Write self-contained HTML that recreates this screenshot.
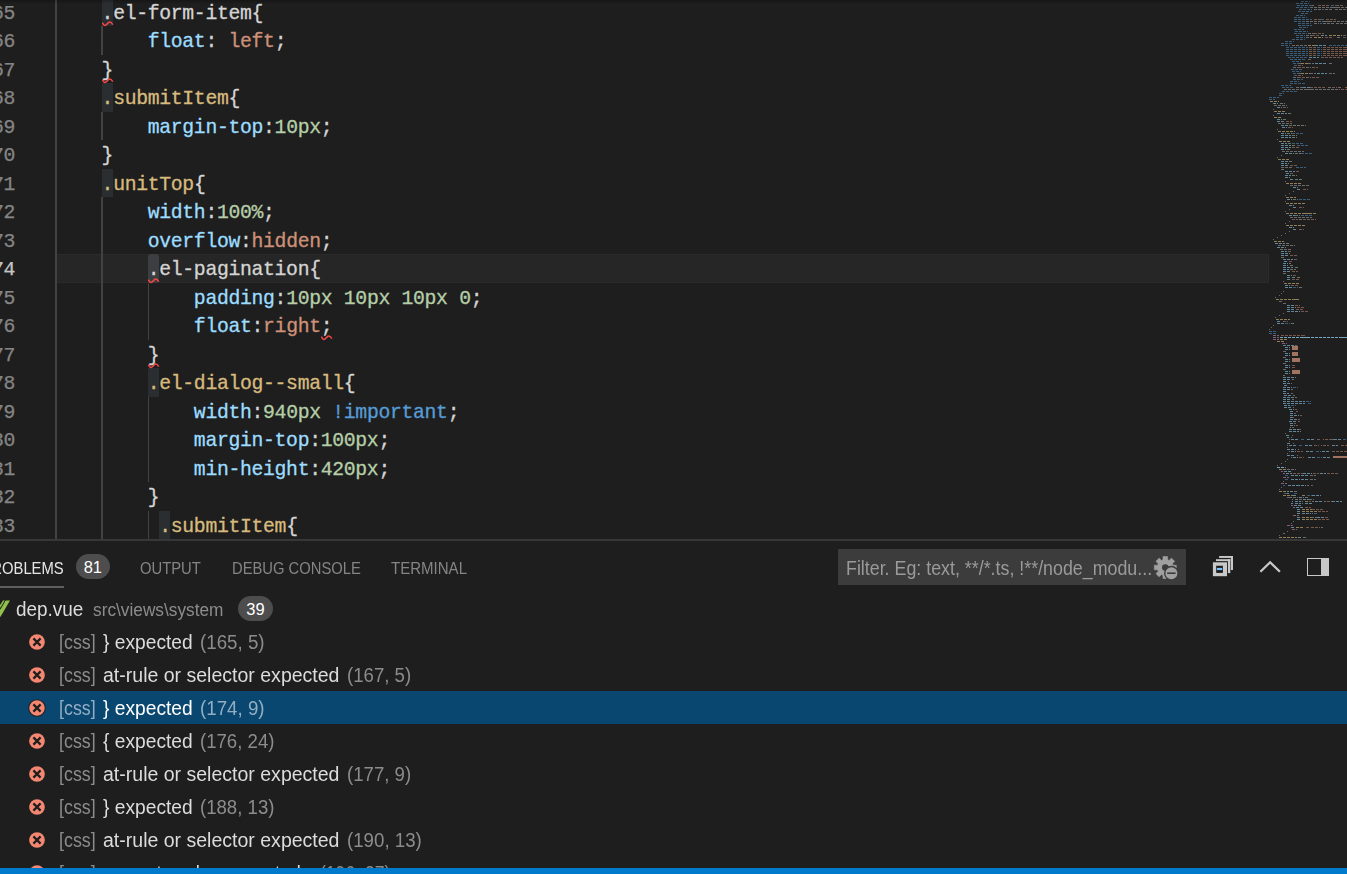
<!DOCTYPE html>
<html>
<head>
<meta charset="utf-8">
<title>dep.vue</title>
<style>
html,body{margin:0;padding:0;background:#1e1e1e;}
body{width:1347px;height:874px;overflow:hidden;position:relative;font-family:"Liberation Sans",sans-serif;}
#editor{position:absolute;left:0;top:0;width:1347px;height:540px;overflow:hidden;background:#1e1e1e;}
.ln{position:absolute;left:-41px;width:56px;height:28.5px;line-height:28.5px;margin-top:2.25px;text-align:right;font-family:"Liberation Mono",monospace;font-size:19.75px;letter-spacing:-0.32px;color:#858585;white-space:pre;-webkit-text-stroke:0.25px;}
.ln.act{color:#c6c6c6;}
.cl{position:absolute;height:28.5px;line-height:28.5px;margin-top:2.25px;font-family:"Liberation Mono",monospace;font-size:19.75px;letter-spacing:-0.32px;color:#d4d4d4;white-space:pre;-webkit-text-stroke:0.3px;}
.p{color:#9cdcfe}.v{color:#ce9178}.n{color:#b5cea8}.s{color:#d7ba7d}.k{color:#569cd6}
.g{position:absolute;width:1.2px;background:#424242;}
.hl{position:absolute;width:11px;height:28.5px;background:#2b2e31;}
.hl.cur{background:#3c3e41;border-radius:3px;width:11.2px;}
.sq{position:absolute;width:12px;height:6px;}
#curline{position:absolute;left:55.5px;top:254px;width:1213.7px;height:29px;background:#262626;border:1.5px solid #2a2a2a;box-sizing:border-box;}
#shadow{position:absolute;left:0;top:0;width:1347px;height:3.5px;background:linear-gradient(#000 0,rgba(0,0,0,0) 100%);opacity:.27;}
#minimap{position:absolute;left:1268px;top:0;width:79px;height:540px;overflow:hidden;}
#panel{position:absolute;left:0;top:540px;width:1347px;height:329px;background:#1e1e1e;overflow:hidden;}
#pborder{position:absolute;left:0;top:539px;width:1347px;height:2.4px;background:linear-gradient(#2c2c2c,#414141 45%,#414141 55%,#2a2a2a);}
#status{position:absolute;left:0;top:868.4px;width:1347px;height:6px;background:#007acc;}
.t{position:absolute;white-space:pre;line-height:1;}
.tab{font-size:16.5px;color:#858585;top:19.7px;}
.tab.on{color:#e7e7e7;}
.badge{position:absolute;overflow:hidden;background:#4d4d4d;border-radius:13px;color:#fff;text-align:center;}
.row{position:absolute;left:0;width:1347px;height:33px;}
.row.sel{background:#094771;}
.r{font-size:19.5px;top:8px;color:#dcdcdc;}
.dim{color:#8c8c8c;}
.sel .r{color:#ffffff;}
.sel .dim{color:#93adc2;}
.ei{position:absolute;left:28.2px;top:8.6px;width:18px;height:18px;}
#minimap i{position:absolute;display:block;height:1.15px;margin-top:.65px;background:currentColor;}
#minimap i.d{background:repeating-linear-gradient(90deg,currentColor 0,currentColor 3.1px,transparent 3.1px,transparent 3.9px);}
#minimap .b{color:#569cd6;opacity:.5}#minimap .w{color:#d4d4d4;opacity:.42}#minimap .o{color:#ce9178;opacity:.5}
#minimap .y{color:#d7ba7d;opacity:.62}#minimap .g{color:#b5cea8;opacity:.5}#minimap .l{color:#9cdcfe;opacity:.55}
#minimap .p{color:#c586c0;opacity:.6}#minimap .l.s{opacity:.72}#minimap .o.s{opacity:.75;height:2px;margin-top:0}
#minimap{filter:blur(.35px);}

</style>
</head>
<body>
<div id="editor">
<div id="curline"></div>
<div class="g" style="left:55.35px;top:-2.50px;height:28.5px"></div>
<div class="g" style="left:55.35px;top:26.00px;height:28.5px"></div>
<div class="g" style="left:101.47px;top:26.00px;height:28.5px"></div>
<div class="g" style="left:55.35px;top:54.50px;height:28.5px"></div>
<div class="g" style="left:55.35px;top:83.00px;height:28.5px"></div>
<div class="g" style="left:55.35px;top:111.50px;height:28.5px"></div>
<div class="g" style="left:101.47px;top:111.50px;height:28.5px"></div>
<div class="g" style="left:55.35px;top:140.00px;height:28.5px"></div>
<div class="g" style="left:55.35px;top:168.50px;height:28.5px"></div>
<div class="g" style="left:55.35px;top:197.00px;height:28.5px"></div>
<div class="g" style="left:101.47px;top:197.00px;height:28.5px"></div>
<div class="g" style="left:55.35px;top:225.50px;height:28.5px"></div>
<div class="g" style="left:101.47px;top:225.50px;height:28.5px"></div>
<div class="g" style="left:55.35px;top:254.00px;height:28.5px"></div>
<div class="g" style="left:101.47px;top:254.00px;height:28.5px"></div>
<div class="g" style="left:55.35px;top:282.50px;height:28.5px"></div>
<div class="g" style="left:101.47px;top:282.50px;height:28.5px"></div>
<div class="g" style="left:147.59px;top:282.50px;height:28.5px"></div>
<div class="g" style="left:55.35px;top:311.00px;height:28.5px"></div>
<div class="g" style="left:101.47px;top:311.00px;height:28.5px"></div>
<div class="g" style="left:147.59px;top:311.00px;height:28.5px"></div>
<div class="g" style="left:55.35px;top:339.50px;height:28.5px"></div>
<div class="g" style="left:101.47px;top:339.50px;height:28.5px"></div>
<div class="g" style="left:55.35px;top:368.00px;height:28.5px"></div>
<div class="g" style="left:101.47px;top:368.00px;height:28.5px"></div>
<div class="g" style="left:55.35px;top:396.50px;height:28.5px"></div>
<div class="g" style="left:101.47px;top:396.50px;height:28.5px"></div>
<div class="g" style="left:147.59px;top:396.50px;height:28.5px"></div>
<div class="g" style="left:55.35px;top:425.00px;height:28.5px"></div>
<div class="g" style="left:101.47px;top:425.00px;height:28.5px"></div>
<div class="g" style="left:147.59px;top:425.00px;height:28.5px"></div>
<div class="g" style="left:55.35px;top:453.50px;height:28.5px"></div>
<div class="g" style="left:101.47px;top:453.50px;height:28.5px"></div>
<div class="g" style="left:147.59px;top:453.50px;height:28.5px"></div>
<div class="g" style="left:55.35px;top:482.00px;height:28.5px"></div>
<div class="g" style="left:101.47px;top:482.00px;height:28.5px"></div>
<div class="g" style="left:55.35px;top:510.50px;height:28.5px"></div>
<div class="g" style="left:101.47px;top:510.50px;height:28.5px"></div>
<div class="g" style="left:147.59px;top:510.50px;height:28.5px"></div>
<div class="hl" style="left:101.62px;top:-2.50px"></div>
<div class="hl" style="left:101.62px;top:83.00px"></div>
<div class="hl" style="left:101.62px;top:168.50px"></div>
<div class="hl cur" style="left:147.74px;top:254.00px"></div>
<div class="hl" style="left:147.74px;top:368.00px"></div>
<div class="hl" style="left:159.27px;top:510.50px"></div>
<div class="ln" style="top:-2.50px">165</div>
<div class="cl" style="top:-2.50px;left:101.62px">.el-form-item{</div>
<div class="ln" style="top:26.00px">166</div>
<div class="cl" style="top:26.00px;left:147.74px"><span class="p">float</span>: <span class="v">left</span>;</div>
<div class="ln" style="top:54.50px">167</div>
<div class="cl" style="top:54.50px;left:101.62px">}</div>
<div class="ln" style="top:83.00px">168</div>
<div class="cl" style="top:83.00px;left:101.62px"><span class="s">.submitItem</span>{</div>
<div class="ln" style="top:111.50px">169</div>
<div class="cl" style="top:111.50px;left:147.74px"><span class="p">margin-top</span>:<span class="n">10px</span>;</div>
<div class="ln" style="top:140.00px">170</div>
<div class="cl" style="top:140.00px;left:101.62px">}</div>
<div class="ln" style="top:168.50px">171</div>
<div class="cl" style="top:168.50px;left:101.62px"><span class="s">.unitTop</span>{</div>
<div class="ln" style="top:197.00px">172</div>
<div class="cl" style="top:197.00px;left:147.74px"><span class="p">width</span>:<span class="n">100%</span>;</div>
<div class="ln" style="top:225.50px">173</div>
<div class="cl" style="top:225.50px;left:147.74px"><span class="p">overflow</span>:<span class="v">hidden</span>;</div>
<div class="ln act" style="top:254.00px">174</div>
<div class="cl" style="top:254.00px;left:147.74px">.el-pagination{</div>
<div class="ln" style="top:282.50px">175</div>
<div class="cl" style="top:282.50px;left:193.86px"><span class="p">padding</span>:<span class="n">10px</span> <span class="n">10px</span> <span class="n">10px</span> <span class="n">0</span>;</div>
<div class="ln" style="top:311.00px">176</div>
<div class="cl" style="top:311.00px;left:193.86px"><span class="p">float</span>:<span class="v">right</span>;</div>
<div class="ln" style="top:339.50px">177</div>
<div class="cl" style="top:339.50px;left:147.74px">}</div>
<div class="ln" style="top:368.00px">178</div>
<div class="cl" style="top:368.00px;left:147.74px"><span class="s">.el-dialog--small</span>{</div>
<div class="ln" style="top:396.50px">179</div>
<div class="cl" style="top:396.50px;left:193.86px"><span class="p">width</span>:<span class="n">940px</span> <span class="k">!important</span>;</div>
<div class="ln" style="top:425.00px">180</div>
<div class="cl" style="top:425.00px;left:193.86px"><span class="p">margin-top</span>:<span class="n">100px</span>;</div>
<div class="ln" style="top:453.50px">181</div>
<div class="cl" style="top:453.50px;left:193.86px"><span class="p">min-height</span>:<span class="n">420px</span>;</div>
<div class="ln" style="top:482.00px">182</div>
<div class="cl" style="top:482.00px;left:147.74px">}</div>
<div class="ln" style="top:510.50px">183</div>
<div class="cl" style="top:510.50px;left:159.27px"><span class="s">.submitItem</span>{</div>
<svg class="sq" style="left:101.92px;top:21.30px" viewBox="0 0 12 6"><path d="M0.3 1.6 C1.2 3.6 2.2 4.6 3.2 4.4 C5 4 5.8 1.2 7.6 1 C9 0.9 9.8 2 10.8 3.6" fill="none" stroke="#f44747" stroke-width="1.55"/></svg>
<svg class="sq" style="left:101.92px;top:78.30px" viewBox="0 0 12 6"><path d="M0.3 1.6 C1.2 3.6 2.2 4.6 3.2 4.4 C5 4 5.8 1.2 7.6 1 C9 0.9 9.8 2 10.8 3.6" fill="none" stroke="#f44747" stroke-width="1.55"/></svg>
<svg class="sq" style="left:148.04px;top:277.80px" viewBox="0 0 12 6"><path d="M0.3 1.6 C1.2 3.6 2.2 4.6 3.2 4.4 C5 4 5.8 1.2 7.6 1 C9 0.9 9.8 2 10.8 3.6" fill="none" stroke="#f44747" stroke-width="1.55"/></svg>
<svg class="sq" style="left:320.99px;top:334.80px" viewBox="0 0 12 6"><path d="M0.3 1.6 C1.2 3.6 2.2 4.6 3.2 4.4 C5 4 5.8 1.2 7.6 1 C9 0.9 9.8 2 10.8 3.6" fill="none" stroke="#f44747" stroke-width="1.55"/></svg>
<svg class="sq" style="left:148.04px;top:363.30px" viewBox="0 0 12 6"><path d="M0.3 1.6 C1.2 3.6 2.2 4.6 3.2 4.4 C5 4 5.8 1.2 7.6 1 C9 0.9 9.8 2 10.8 3.6" fill="none" stroke="#f44747" stroke-width="1.55"/></svg>
<div id="minimap">
<i class="b d" style="left:32.7px;top:0px;width:9.6px"></i>
<i class="b d" style="left:27.8px;top:2px;width:13.0px"></i>
<i class="b d" style="left:28.5px;top:4px;width:15.8px"></i>
<i class="w" style="left:44.3px;top:4px;width:2.1px"></i>
<i class="o d" style="left:49.8px;top:4px;width:11.0px"></i>
<i class="b d" style="left:62.9px;top:4px;width:4.8px"></i>
<i class="o d" style="left:67.7px;top:4px;width:6.9px"></i>
<i class="b d" style="left:27.8px;top:6px;width:13.7px"></i>
<i class="w d" style="left:41.6px;top:6px;width:37.4px"></i>
<i class="b d" style="left:30.6px;top:8px;width:13.7px"></i>
<i class="w d" style="left:46.4px;top:8px;width:6.9px"></i>
<i class="b" style="left:53.9px;top:8px;width:2.1px"></i>
<i class="w d" style="left:56.7px;top:8px;width:6.9px"></i>
<i class="w d" style="left:67.0px;top:8px;width:12.0px"></i>
<i class="b d" style="left:30.2px;top:10px;width:13.4px"></i>
<i class="b d" style="left:32.7px;top:12px;width:6.9px"></i>
<i class="b d" style="left:27.8px;top:14px;width:9.6px"></i>
<i class="b d" style="left:25.8px;top:16px;width:13.7px"></i>
<i class="b d" style="left:25.8px;top:18px;width:18.5px"></i>
<i class="o d" style="left:46.4px;top:18px;width:6.2px"></i>
<i class="b d" style="left:53.3px;top:18px;width:4.1px"></i>
<i class="o d" style="left:58.1px;top:18px;width:9.6px"></i>
<i class="b d" style="left:25.8px;top:20px;width:11.7px"></i>
<i class="w d" style="left:37.5px;top:20px;width:41.5px"></i>
<i class="b d" style="left:29.9px;top:22px;width:13.0px"></i>
<i class="w d" style="left:46.4px;top:22px;width:4.8px"></i>
<i class="b" style="left:51.9px;top:22px;width:2.1px"></i>
<i class="w d" style="left:54.6px;top:22px;width:11.0px"></i>
<i class="w d" style="left:68.4px;top:22px;width:10.6px"></i>
<i class="b d" style="left:30.2px;top:24px;width:13.4px"></i>
<i class="b d" style="left:31.3px;top:26px;width:8.9px"></i>
<i class="b d" style="left:25.8px;top:28px;width:10.3px"></i>
<i class="b d" style="left:26.5px;top:30px;width:13.0px"></i>
<i class="b d" style="left:25.8px;top:32px;width:13.0px"></i>
<i class="w d" style="left:39.5px;top:32px;width:6.2px"></i>
<i class="o d" style="left:46.4px;top:32px;width:9.6px"></i>
<i class="b d" style="left:27.8px;top:34px;width:9.6px"></i>
<i class="w d" style="left:38.1px;top:34px;width:5.5px"></i>
<i class="o d" style="left:43.6px;top:34px;width:8.9px"></i>
<i class="l d" style="left:52.6px;top:34px;width:6.9px"></i>
<i class="y d" style="left:60.8px;top:34px;width:13.7px"></i>
<i class="o d" style="left:75.2px;top:34px;width:3.8px"></i>
<i class="b d" style="left:27.8px;top:36px;width:9.6px"></i>
<i class="w d" style="left:38.1px;top:36px;width:6.2px"></i>
<i class="y d" style="left:46.4px;top:36px;width:8.9px"></i>
<i class="o d" style="left:56.7px;top:36px;width:8.2px"></i>
<i class="w d" style="left:69.1px;top:36px;width:2.7px"></i>
<i class="b d" style="left:74.5px;top:36px;width:4.5px"></i>
<i class="b d" style="left:24.4px;top:38px;width:13.0px"></i>
<i class="b d" style="left:16.9px;top:40px;width:9.6px"></i>
<i class="b d" style="left:13.4px;top:42px;width:11.0px"></i>
<i class="b d" style="left:13.4px;top:44px;width:8.2px"></i>
<i class="w d" style="left:23.7px;top:44px;width:15.8px"></i>
<i class="y d" style="left:40.2px;top:44px;width:6.9px"></i>
<i class="l d" style="left:47.1px;top:44px;width:12.4px"></i>
<i class="b d" style="left:60.8px;top:44px;width:18.2px"></i>
<i class="b d" style="left:17.5px;top:46px;width:22.7px"></i>
<i class="o d" style="left:40.9px;top:46px;width:7.6px"></i>
<i class="b d" style="left:48.5px;top:46px;width:5.5px"></i>
<i class="o d" style="left:54.6px;top:46px;width:24.4px"></i>
<i class="b d" style="left:17.5px;top:48px;width:22.7px"></i>
<i class="o d" style="left:40.9px;top:48px;width:7.6px"></i>
<i class="b d" style="left:48.5px;top:48px;width:5.5px"></i>
<i class="o d" style="left:54.6px;top:48px;width:24.4px"></i>
<i class="b d" style="left:17.5px;top:50px;width:22.7px"></i>
<i class="o d" style="left:40.9px;top:50px;width:7.6px"></i>
<i class="b d" style="left:48.5px;top:50px;width:5.5px"></i>
<i class="o d" style="left:54.6px;top:50px;width:24.4px"></i>
<i class="b d" style="left:17.5px;top:52px;width:22.7px"></i>
<i class="o d" style="left:40.9px;top:52px;width:7.6px"></i>
<i class="b d" style="left:48.5px;top:52px;width:5.5px"></i>
<i class="o d" style="left:54.6px;top:52px;width:24.4px"></i>
<i class="b d" style="left:17.5px;top:54px;width:22.7px"></i>
<i class="o d" style="left:40.9px;top:54px;width:7.6px"></i>
<i class="b d" style="left:48.5px;top:54px;width:5.5px"></i>
<i class="o d" style="left:54.6px;top:54px;width:24.4px"></i>
<i class="b d" style="left:19.6px;top:56px;width:20.6px"></i>
<i class="l d" style="left:40.9px;top:56px;width:10.3px"></i>
<i class="o d" style="left:52.6px;top:56px;width:22.0px"></i>
<i class="b d" style="left:22.4px;top:58px;width:15.1px"></i>
<i class="o d" style="left:39.5px;top:58px;width:3.4px"></i>
<i class="b d" style="left:23.7px;top:60px;width:9.6px"></i>
<i class="b d" style="left:25.1px;top:62px;width:6.2px"></i>
<i class="w" style="left:31.3px;top:62px;width:2.1px"></i>
<i class="y d" style="left:33.3px;top:62px;width:6.9px"></i>
<i class="w d" style="left:40.2px;top:62px;width:6.2px"></i>
<i class="l d" style="left:47.1px;top:62px;width:12.4px"></i>
<i class="w d" style="left:60.8px;top:62px;width:4.1px"></i>
<i class="b d" style="left:25.8px;top:64px;width:4.1px"></i>
<i class="o d" style="left:29.9px;top:64px;width:5.5px"></i>
<i class="w d" style="left:25.4px;top:66px;width:4.5px"></i>
<i class="o d" style="left:29.9px;top:66px;width:6.9px"></i>
<i class="w d" style="left:38.1px;top:66px;width:4.8px"></i>
<i class="o d" style="left:43.6px;top:66px;width:6.2px"></i>
<i class="b d" style="left:23.0px;top:68px;width:11.0px"></i>
<i class="b d" style="left:23.7px;top:70px;width:8.9px"></i>
<i class="b d" style="left:25.1px;top:72px;width:6.2px"></i>
<i class="w" style="left:31.3px;top:72px;width:1.4px"></i>
<i class="y d" style="left:32.7px;top:72px;width:9.6px"></i>
<i class="w d" style="left:42.3px;top:72px;width:6.2px"></i>
<i class="l d" style="left:49.1px;top:72px;width:10.3px"></i>
<i class="w d" style="left:60.8px;top:72px;width:6.2px"></i>
<i class="b d" style="left:25.8px;top:74px;width:4.1px"></i>
<i class="o d" style="left:29.9px;top:74px;width:5.5px"></i>
<i class="w d" style="left:25.4px;top:76px;width:4.5px"></i>
<i class="o d" style="left:29.9px;top:76px;width:6.9px"></i>
<i class="w d" style="left:38.1px;top:76px;width:4.8px"></i>
<i class="o d" style="left:43.6px;top:76px;width:8.2px"></i>
<i class="b d" style="left:25.1px;top:78px;width:10.3px"></i>
<i class="b d" style="left:21.7px;top:80px;width:9.6px"></i>
<i class="b d" style="left:21.7px;top:82px;width:15.1px"></i>
<i class="b d" style="left:13.4px;top:84px;width:9.6px"></i>
<i class="b d" style="left:13.8px;top:86px;width:12.7px"></i>
<i class="w d" style="left:27.8px;top:86px;width:6.9px"></i>
<i class="l d" style="left:34.7px;top:86px;width:6.9px"></i>
<i class="o d" style="left:41.6px;top:86px;width:16.5px"></i>
<i class="w d" style="left:60.1px;top:86px;width:3.4px"></i>
<i class="o d" style="left:64.2px;top:86px;width:4.8px"></i>
<i class="w d" style="left:69.7px;top:86px;width:4.8px"></i>
<i class="o" style="left:76.6px;top:86px;width:2.4px"></i>
<i class="w d" style="left:15.5px;top:88px;width:56.3px"></i>
<i class="o d" style="left:72.5px;top:88px;width:6.5px"></i>
<i class="b d" style="left:13.8px;top:90px;width:14.8px"></i>
<i class="b d" style="left:11.0px;top:92px;width:4.5px"></i>
<i class="b d" style="left:10.7px;top:94px;width:4.1px"></i>
<i class="b d" style="left:1.4px;top:96px;width:10.0px"></i>
<i class="b d" style="left:1.4px;top:98px;width:5.8px"></i>
<i class="y d" style="left:1.7px;top:100px;width:8.9px"></i>
<i class="l d" style="left:5.2px;top:102px;width:4.8px"></i>
<i class="g d" style="left:12.0px;top:102px;width:4.8px"></i>
<i class="w d" style="left:5.5px;top:104px;width:13.4px"></i>
<i class="l d" style="left:9.0px;top:106px;width:4.5px"></i>
<i class="o d" style="left:14.8px;top:106px;width:5.5px"></i>
<i class="w" style="left:5.0px;top:108px;width:0.8px"></i>
<i class="y d" style="left:5.9px;top:110px;width:11.0px"></i>
<i class="l d" style="left:9.0px;top:112px;width:10.0px"></i>
<i class="g d" style="left:19.6px;top:112px;width:4.8px"></i>
<i class="w" style="left:5.0px;top:114px;width:0.8px"></i>
<i class="y d" style="left:5.9px;top:116px;width:7.6px"></i>
<i class="l d" style="left:9.0px;top:118px;width:4.8px"></i>
<i class="g d" style="left:14.8px;top:118px;width:4.5px"></i>
<i class="l d" style="left:9.0px;top:120px;width:8.2px"></i>
<i class="o d" style="left:17.9px;top:120px;width:6.5px"></i>
<i class="w d" style="left:10.0px;top:122px;width:13.7px"></i>
<i class="l d" style="left:13.1px;top:124px;width:7.2px"></i>
<i class="g d" style="left:21.0px;top:124px;width:16.5px"></i>
<i class="l d" style="left:13.8px;top:126px;width:5.2px"></i>
<i class="o d" style="left:19.6px;top:126px;width:5.2px"></i>
<i class="w" style="left:9.0px;top:128px;width:0.9px"></i>
<i class="y d" style="left:10.0px;top:130px;width:16.8px"></i>
<i class="l d" style="left:13.1px;top:132px;width:5.2px"></i>
<i class="g d" style="left:18.9px;top:132px;width:4.8px"></i>
<i class="b d" style="left:24.4px;top:132px;width:11.7px"></i>
<i class="l d" style="left:13.1px;top:134px;width:10.0px"></i>
<i class="g d" style="left:23.7px;top:134px;width:5.5px"></i>
<i class="l d" style="left:13.1px;top:136px;width:10.0px"></i>
<i class="g d" style="left:23.7px;top:136px;width:5.5px"></i>
<i class="w" style="left:9.0px;top:138px;width:0.9px"></i>
<i class="y d" style="left:11.0px;top:140px;width:10.6px"></i>
<i class="l d" style="left:13.1px;top:142px;width:6.2px"></i>
<i class="g d" style="left:19.9px;top:142px;width:3.4px"></i>
<i class="b d" style="left:24.1px;top:142px;width:10.6px"></i>
<i class="l d" style="left:13.1px;top:144px;width:10.0px"></i>
<i class="g d" style="left:23.7px;top:144px;width:4.8px"></i>
<i class="b d" style="left:29.2px;top:144px;width:11.7px"></i>
<i class="l d" style="left:13.1px;top:146px;width:10.0px"></i>
<i class="o d" style="left:23.7px;top:146px;width:6.9px"></i>
<i class="l d" style="left:13.1px;top:148px;width:5.2px"></i>
<i class="g d" style="left:18.9px;top:148px;width:4.1px"></i>
<i class="w d" style="left:13.8px;top:150px;width:22.3px"></i>
<i class="l d" style="left:16.9px;top:152px;width:9.6px"></i>
<i class="g d" style="left:27.2px;top:152px;width:5.5px"></i>
<i class="b d" style="left:33.3px;top:152px;width:10.3px"></i>
<i class="w" style="left:13.1px;top:154px;width:0.8px"></i>
<i class="w" style="left:9.0px;top:156px;width:0.9px"></i>
<i class="y d" style="left:10.0px;top:158px;width:11.0px"></i>
<i class="l d" style="left:13.1px;top:160px;width:7.2px"></i>
<i class="g d" style="left:21.0px;top:160px;width:4.1px"></i>
<i class="l d" style="left:13.1px;top:162px;width:5.8px"></i>
<i class="g" style="left:19.6px;top:162px;width:1.7px"></i>
<i class="l d" style="left:13.1px;top:164px;width:7.9px"></i>
<i class="o d" style="left:21.7px;top:164px;width:6.9px"></i>
<i class="w d" style="left:13.1px;top:166px;width:12.0px"></i>
<i class="b d" style="left:27.8px;top:166px;width:10.0px"></i>
<i class="w d" style="left:13.1px;top:168px;width:2.7px"></i>
<i class="l d" style="left:16.9px;top:170px;width:10.3px"></i>
<i class="o d" style="left:27.8px;top:170px;width:4.5px"></i>
<i class="l d" style="left:17.5px;top:172px;width:4.1px"></i>
<i class="o d" style="left:22.4px;top:172px;width:4.1px"></i>
<i class="l d" style="left:16.9px;top:174px;width:6.2px"></i>
<i class="g d" style="left:23.7px;top:174px;width:5.5px"></i>
<i class="l d" style="left:16.9px;top:176px;width:4.8px"></i>
<i class="l d" style="left:21.7px;top:178px;width:4.8px"></i>
<i class="g d" style="left:27.2px;top:178px;width:6.9px"></i>
<i class="w" style="left:16.9px;top:180px;width:0.8px"></i>
<i class="y d" style="left:17.9px;top:182px;width:16.1px"></i>
<i class="w d" style="left:22.0px;top:184px;width:18.9px"></i>
<i class="l d" style="left:25.1px;top:186px;width:4.8px"></i>
<i class="l d" style="left:29.2px;top:188px;width:4.1px"></i>
<i class="o d" style="left:34.7px;top:188px;width:5.5px"></i>
<i class="w" style="left:25.1px;top:190px;width:0.8px"></i>
<i class="w" style="left:21.0px;top:192px;width:0.8px"></i>
<i class="w" style="left:16.9px;top:194px;width:0.8px"></i>
<i class="y d" style="left:17.9px;top:196px;width:10.0px"></i>
<i class="l d" style="left:18.9px;top:198px;width:5.5px"></i>
<i class="g d" style="left:25.1px;top:198px;width:4.8px"></i>
<i class="b d" style="left:31.3px;top:198px;width:10.6px"></i>
<i class="w" style="left:16.9px;top:200px;width:0.8px"></i>
<i class="y d" style="left:17.9px;top:202px;width:18.9px"></i>
<i class="l d" style="left:21.0px;top:204px;width:4.8px"></i>
<i class="l d" style="left:25.1px;top:206px;width:4.1px"></i>
<i class="o d" style="left:30.6px;top:206px;width:5.8px"></i>
<i class="w" style="left:21.0px;top:208px;width:0.8px"></i>
<i class="w" style="left:16.9px;top:210px;width:0.8px"></i>
<i class="y d" style="left:17.9px;top:212px;width:30.2px"></i>
<i class="l d" style="left:21.0px;top:214px;width:5.5px"></i>
<i class="g d" style="left:27.2px;top:214px;width:4.8px"></i>
<i class="b d" style="left:33.3px;top:214px;width:10.3px"></i>
<i class="w d" style="left:22.0px;top:216px;width:21.6px"></i>
<i class="o d" style="left:23.7px;top:218px;width:6.2px"></i>
<i class="g d" style="left:30.6px;top:218px;width:4.1px"></i>
<i class="o d" style="left:35.4px;top:218px;width:13.0px"></i>
<i class="w" style="left:21.0px;top:220px;width:0.8px"></i>
<i class="w" style="left:16.9px;top:222px;width:0.8px"></i>
<i class="y d" style="left:17.9px;top:224px;width:18.9px"></i>
<i class="l d" style="left:21.0px;top:226px;width:4.8px"></i>
<i class="l d" style="left:25.1px;top:228px;width:4.1px"></i>
<i class="o d" style="left:30.6px;top:228px;width:5.8px"></i>
<i class="w" style="left:21.0px;top:230px;width:0.8px"></i>
<i class="w" style="left:16.9px;top:232px;width:0.8px"></i>
<i class="w" style="left:13.1px;top:234px;width:0.8px"></i>
<i class="w" style="left:9.0px;top:236px;width:0.9px"></i>
<i class="w" style="left:5.0px;top:238px;width:0.8px"></i>
<i class="y d" style="left:5.9px;top:240px;width:10.3px"></i>
<i class="l d" style="left:6.9px;top:242px;width:10.3px"></i>
<i class="g d" style="left:17.9px;top:242px;width:4.5px"></i>
<i class="w d" style="left:10.0px;top:244px;width:16.8px"></i>
<i class="l d" style="left:9.0px;top:246px;width:7.2px"></i>
<i class="g" style="left:16.9px;top:246px;width:1.4px"></i>
<i class="w d" style="left:12.0px;top:248px;width:12.0px"></i>
<i class="l d" style="left:13.1px;top:250px;width:5.8px"></i>
<i class="o d" style="left:19.6px;top:250px;width:4.5px"></i>
<i class="l d" style="left:13.1px;top:252px;width:7.2px"></i>
<i class="g" style="left:21.0px;top:252px;width:1.0px"></i>
<i class="l d" style="left:13.1px;top:254px;width:7.9px"></i>
<i class="o d" style="left:21.7px;top:254px;width:6.9px"></i>
<i class="w d" style="left:13.1px;top:256px;width:2.7px"></i>
<i class="l d" style="left:15.1px;top:258px;width:10.0px"></i>
<i class="o d" style="left:25.8px;top:258px;width:4.5px"></i>
<i class="l d" style="left:15.8px;top:260px;width:4.5px"></i>
<i class="o d" style="left:21.0px;top:260px;width:4.1px"></i>
<i class="l d" style="left:15.1px;top:262px;width:5.2px"></i>
<i class="g" style="left:21.0px;top:262px;width:1.7px"></i>
<i class="l d" style="left:15.1px;top:264px;width:4.5px"></i>
<i class="g d" style="left:21.7px;top:264px;width:4.1px"></i>
<i class="l d" style="left:15.1px;top:266px;width:10.0px"></i>
<i class="g d" style="left:26.5px;top:266px;width:4.8px"></i>
<i class="l d" style="left:15.1px;top:268px;width:5.8px"></i>
<i class="g d" style="left:21.7px;top:268px;width:6.2px"></i>
<i class="l d" style="left:15.1px;top:270px;width:7.9px"></i>
<i class="o d" style="left:23.7px;top:270px;width:6.5px"></i>
<i class="w d" style="left:15.1px;top:272px;width:3.8px"></i>
<i class="l d" style="left:19.3px;top:274px;width:4.5px"></i>
<i class="o d" style="left:24.8px;top:274px;width:3.8px"></i>
<i class="l d" style="left:19.3px;top:276px;width:3.8px"></i>
<i class="l d" style="left:23.7px;top:276px;width:4.8px"></i>
<i class="g d" style="left:29.2px;top:276px;width:4.1px"></i>
<i class="l d" style="left:19.3px;top:278px;width:3.8px"></i>
<i class="o d" style="left:24.4px;top:278px;width:7.9px"></i>
<i class="w" style="left:15.1px;top:280px;width:0.8px"></i>
<i class="y d" style="left:16.2px;top:282px;width:14.8px"></i>
<i class="l d" style="left:17.2px;top:284px;width:4.5px"></i>
<i class="o d" style="left:22.7px;top:284px;width:7.2px"></i>
<i class="l d" style="left:17.2px;top:286px;width:7.2px"></i>
<i class="b d" style="left:25.1px;top:286px;width:4.8px"></i>
<i class="g d" style="left:30.6px;top:286px;width:3.8px"></i>
<i class="w" style="left:15.1px;top:290px;width:0.8px"></i>
<i class="w" style="left:13.1px;top:292px;width:0.8px"></i>
<i class="w" style="left:11.0px;top:294px;width:0.8px"></i>
<i class="w" style="left:6.9px;top:296px;width:0.8px"></i>
<i class="y d" style="left:7.9px;top:298px;width:23.0px"></i>
<i class="w d" style="left:11.0px;top:300px;width:2.7px"></i>
<i class="w d" style="left:15.1px;top:302px;width:3.8px"></i>
<i class="l d" style="left:19.3px;top:304px;width:6.5px"></i>
<i class="o d" style="left:26.8px;top:304px;width:5.5px"></i>
<i class="l d" style="left:19.3px;top:306px;width:8.6px"></i>
<i class="o d" style="left:28.5px;top:306px;width:8.9px"></i>
<i class="l d" style="left:19.3px;top:308px;width:7.9px"></i>
<i class="o d" style="left:27.8px;top:308px;width:6.9px"></i>
<i class="l d" style="left:19.3px;top:310px;width:12.7px"></i>
<i class="o d" style="left:33.0px;top:310px;width:8.2px"></i>
<i class="w" style="left:15.1px;top:312px;width:0.8px"></i>
<i class="w" style="left:11.0px;top:314px;width:0.8px"></i>
<i class="w" style="left:6.9px;top:316px;width:0.8px"></i>
<i class="y d" style="left:7.9px;top:318px;width:14.1px"></i>
<i class="l d" style="left:9.3px;top:320px;width:4.1px"></i>
<i class="o d" style="left:14.8px;top:320px;width:4.8px"></i>
<i class="l d" style="left:9.0px;top:322px;width:7.2px"></i>
<i class="b d" style="left:17.2px;top:322px;width:4.5px"></i>
<i class="g d" style="left:22.7px;top:322px;width:4.8px"></i>
<i class="w" style="left:5.0px;top:324px;width:0.8px"></i>
<i class="w" style="left:3.0px;top:326px;width:0.8px"></i>
<i class="w" style="left:1.1px;top:328px;width:0.8px"></i>
<i class="b d" style="left:1.1px;top:330px;width:7.2px"></i>
<i class="b d" style="left:1.1px;top:332px;width:7.2px"></i>
<i class="p d" style="left:5.2px;top:334px;width:4.5px"></i>
<i class="w" style="left:10.3px;top:334px;width:1.0px"></i>
<i class="o d" style="left:12.7px;top:334px;width:24.4px"></i>
<i class="p d" style="left:5.2px;top:336px;width:4.5px"></i>
<i class="w" style="left:10.3px;top:336px;width:1.0px"></i>
<i class="l s d" style="left:12.0px;top:336px;width:67.0px"></i>
<i class="p d" style="left:5.2px;top:338px;width:5.5px"></i>
<i class="y d" style="left:12.0px;top:338px;width:7.6px"></i>
<i class="y d" style="left:9.0px;top:340px;width:6.5px"></i>
<i class="p d" style="left:13.8px;top:342px;width:5.2px"></i>
<i class="l d" style="left:15.1px;top:344px;width:10.6px"></i>
<i class="w" style="left:26.5px;top:344px;width:2.1px"></i>
<i class="l d" style="left:17.2px;top:346px;width:4.5px"></i>
<i class="o s" style="left:24.1px;top:346px;width:5.8px"></i>
<i class="l d" style="left:17.2px;top:348px;width:4.5px"></i>
<i class="o s" style="left:24.1px;top:348px;width:5.8px"></i>
<i class="w d" style="left:15.1px;top:350px;width:2.7px"></i>
<i class="l d" style="left:17.2px;top:352px;width:4.5px"></i>
<i class="o s" style="left:24.1px;top:352px;width:5.8px"></i>
<i class="l d" style="left:17.2px;top:354px;width:4.5px"></i>
<i class="o s" style="left:24.1px;top:354px;width:5.8px"></i>
<i class="w d" style="left:15.1px;top:356px;width:2.7px"></i>
<i class="l d" style="left:17.2px;top:358px;width:4.5px"></i>
<i class="o s" style="left:24.1px;top:358px;width:7.9px"></i>
<i class="l d" style="left:17.2px;top:360px;width:4.8px"></i>
<i class="o s" style="left:24.1px;top:360px;width:7.9px"></i>
<i class="w d" style="left:15.1px;top:362px;width:2.7px"></i>
<i class="l d" style="left:17.2px;top:364px;width:4.5px"></i>
<i class="o d" style="left:24.1px;top:364px;width:4.1px"></i>
<i class="l d" style="left:17.2px;top:366px;width:4.8px"></i>
<i class="o d" style="left:24.1px;top:366px;width:4.1px"></i>
<i class="w d" style="left:15.1px;top:368px;width:2.7px"></i>
<i class="l d" style="left:17.2px;top:370px;width:4.5px"></i>
<i class="o s" style="left:24.1px;top:370px;width:8.2px"></i>
<i class="l d" style="left:17.2px;top:372px;width:4.8px"></i>
<i class="o s" style="left:24.1px;top:372px;width:8.2px"></i>
<i class="w" style="left:15.1px;top:374px;width:2.1px"></i>
<i class="l d" style="left:15.1px;top:376px;width:10.6px"></i>
<i class="g" style="left:26.8px;top:376px;width:1.4px"></i>
<i class="l d" style="left:15.1px;top:378px;width:7.9px"></i>
<i class="g" style="left:24.1px;top:378px;width:2.1px"></i>
<i class="l d" style="left:15.1px;top:380px;width:4.1px"></i>
<i class="w" style="left:19.6px;top:380px;width:1.4px"></i>
<i class="l d" style="left:15.1px;top:382px;width:6.9px"></i>
<i class="w" style="left:22.7px;top:382px;width:1.4px"></i>
<i class="l d" style="left:15.8px;top:384px;width:4.5px"></i>
<i class="l d" style="left:15.1px;top:386px;width:8.6px"></i>
<i class="b d" style="left:24.8px;top:386px;width:5.5px"></i>
<i class="l d" style="left:15.1px;top:388px;width:7.2px"></i>
<i class="w" style="left:23.0px;top:388px;width:2.1px"></i>
<i class="l d" style="left:15.1px;top:390px;width:4.1px"></i>
<i class="l d" style="left:15.1px;top:392px;width:5.8px"></i>
<i class="w" style="left:22.7px;top:392px;width:2.1px"></i>
<i class="l d" style="left:15.5px;top:394px;width:8.9px"></i>
<i class="w" style="left:25.4px;top:394px;width:1.4px"></i>
<i class="l d" style="left:15.1px;top:396px;width:10.6px"></i>
<i class="w" style="left:26.8px;top:396px;width:2.4px"></i>
<i class="l d" style="left:15.1px;top:398px;width:7.2px"></i>
<i class="w" style="left:23.7px;top:398px;width:2.1px"></i>
<i class="l d" style="left:15.1px;top:400px;width:21.6px"></i>
<i class="b d" style="left:38.1px;top:400px;width:5.2px"></i>
<i class="l d" style="left:15.1px;top:402px;width:22.3px"></i>
<i class="b d" style="left:39.5px;top:402px;width:4.8px"></i>
<i class="l d" style="left:15.5px;top:404px;width:6.9px"></i>
<i class="b d" style="left:23.0px;top:404px;width:5.2px"></i>
<i class="l d" style="left:15.5px;top:406px;width:7.6px"></i>
<i class="w" style="left:24.8px;top:406px;width:1.0px"></i>
<i class="l d" style="left:21.0px;top:408px;width:4.8px"></i>
<i class="o" style="left:27.2px;top:408px;width:2.1px"></i>
<i class="l d" style="left:21.7px;top:410px;width:4.5px"></i>
<i class="o" style="left:27.8px;top:410px;width:2.1px"></i>
<i class="l d" style="left:21.7px;top:412px;width:3.4px"></i>
<i class="o" style="left:26.1px;top:412px;width:1.7px"></i>
<i class="l d" style="left:21.7px;top:414px;width:8.9px"></i>
<i class="o" style="left:32.3px;top:414px;width:2.1px"></i>
<i class="l" style="left:21.7px;top:416px;width:2.4px"></i>
<i class="o" style="left:24.4px;top:416px;width:2.1px"></i>
<i class="l d" style="left:21.7px;top:418px;width:7.2px"></i>
<i class="o" style="left:30.2px;top:418px;width:2.1px"></i>
<i class="l d" style="left:21.0px;top:420px;width:8.2px"></i>
<i class="o" style="left:30.2px;top:420px;width:2.1px"></i>
<i class="l d" style="left:21.7px;top:422px;width:3.4px"></i>
<i class="o" style="left:26.1px;top:422px;width:1.7px"></i>
<i class="l d" style="left:21.7px;top:424px;width:5.5px"></i>
<i class="o" style="left:28.2px;top:424px;width:2.1px"></i>
<i class="l" style="left:21.7px;top:426px;width:1.4px"></i>
<i class="o" style="left:24.1px;top:426px;width:1.7px"></i>
<i class="l d" style="left:21.0px;top:428px;width:9.6px"></i>
<i class="o" style="left:31.3px;top:428px;width:1.7px"></i>
<i class="l d" style="left:21.0px;top:430px;width:10.3px"></i>
<i class="g" style="left:32.0px;top:430px;width:1.0px"></i>
<i class="w" style="left:16.9px;top:432px;width:1.0px"></i>
<i class="l d" style="left:17.9px;top:434px;width:4.5px"></i>
<i class="w" style="left:23.7px;top:434px;width:1.0px"></i>
<i class="l" style="left:18.9px;top:436px;width:2.4px"></i>
<i class="w" style="left:22.7px;top:436px;width:1.0px"></i>
<i class="w" style="left:21.0px;top:438px;width:1.0px"></i>
<i class="l d" style="left:23.0px;top:438px;width:8.2px"></i>
<i class="b d" style="left:32.7px;top:438px;width:4.8px"></i>
<i class="l d" style="left:38.8px;top:438px;width:7.6px"></i>
<i class="o d" style="left:48.5px;top:438px;width:4.8px"></i>
<i class="w" style="left:54.6px;top:438px;width:1.4px"></i>
<i class="o d" style="left:56.7px;top:438px;width:6.9px"></i>
<i class="w" style="left:64.2px;top:438px;width:1.4px"></i>
<i class="l d" style="left:66.0px;top:438px;width:6.5px"></i>
<i class="b d" style="left:75.2px;top:438px;width:3.8px"></i>
<i class="w" style="left:21.0px;top:440px;width:1.0px"></i>
<i class="l d" style="left:18.9px;top:442px;width:4.1px"></i>
<i class="w" style="left:25.1px;top:442px;width:1.0px"></i>
<i class="w" style="left:18.9px;top:444px;width:1.0px"></i>
<i class="l d" style="left:21.3px;top:444px;width:7.9px"></i>
<i class="b d" style="left:30.6px;top:444px;width:4.8px"></i>
<i class="l d" style="left:36.8px;top:444px;width:7.6px"></i>
<i class="o d" style="left:46.4px;top:444px;width:4.8px"></i>
<i class="w" style="left:52.6px;top:444px;width:1.4px"></i>
<i class="o d" style="left:54.6px;top:444px;width:6.2px"></i>
<i class="l d" style="left:63.9px;top:444px;width:6.5px"></i>
<i class="o d" style="left:73.2px;top:444px;width:5.8px"></i>
<i class="w" style="left:18.9px;top:446px;width:1.0px"></i>
<i class="l d" style="left:18.9px;top:448px;width:9.6px"></i>
<i class="w" style="left:29.9px;top:448px;width:1.0px"></i>
<i class="w" style="left:21.0px;top:450px;width:1.0px"></i>
<i class="l d" style="left:23.0px;top:450px;width:4.8px"></i>
<i class="o d" style="left:28.9px;top:450px;width:6.2px"></i>
<i class="l d" style="left:38.1px;top:450px;width:8.2px"></i>
<i class="b d" style="left:47.8px;top:450px;width:4.8px"></i>
<i class="l d" style="left:53.9px;top:450px;width:7.6px"></i>
<i class="o d" style="left:63.6px;top:450px;width:15.4px"></i>
<i class="w" style="left:18.9px;top:452px;width:1.0px"></i>
<i class="l d" style="left:18.9px;top:454px;width:8.2px"></i>
<i class="w" style="left:29.2px;top:454px;width:1.0px"></i>
<i class="w" style="left:22.7px;top:456px;width:1.0px"></i>
<i class="l d" style="left:24.8px;top:456px;width:5.2px"></i>
<i class="o d" style="left:30.9px;top:456px;width:5.5px"></i>
<i class="l d" style="left:39.5px;top:456px;width:7.6px"></i>
<i class="b d" style="left:48.8px;top:456px;width:4.8px"></i>
<i class="l d" style="left:55.0px;top:456px;width:7.2px"></i>
<i class="o s" style="left:64.6px;top:456px;width:14.4px"></i>
<i class="w" style="left:18.9px;top:458px;width:1.0px"></i>
<i class="w" style="left:16.9px;top:460px;width:1.0px"></i>
<i class="w" style="left:13.1px;top:462px;width:0.8px"></i>
<i class="w" style="left:9.0px;top:464px;width:0.9px"></i>
<i class="l s d" style="left:9.0px;top:466px;width:7.2px"></i>
<i class="w" style="left:16.9px;top:466px;width:1.0px"></i>
<i class="y d" style="left:11.0px;top:468px;width:7.9px"></i>
<i class="w d" style="left:18.9px;top:468px;width:8.9px"></i>
<i class="p" style="left:13.1px;top:470px;width:2.4px"></i>
<i class="l d" style="left:15.8px;top:470px;width:7.2px"></i>
<i class="p" style="left:15.1px;top:472px;width:2.1px"></i>
<i class="l d" style="left:17.5px;top:472px;width:6.9px"></i>
<i class="o d" style="left:25.1px;top:472px;width:9.6px"></i>
<i class="l d" style="left:35.4px;top:472px;width:8.9px"></i>
<i class="o d" style="left:44.7px;top:472px;width:6.5px"></i>
<i class="l d" style="left:51.5px;top:472px;width:6.5px"></i>
<i class="o d" style="left:58.8px;top:472px;width:12.4px"></i>
<i class="b" style="left:17.2px;top:474px;width:2.4px"></i>
<i class="l d" style="left:22.7px;top:474px;width:9.3px"></i>
<i class="l d" style="left:32.7px;top:474px;width:8.2px"></i>
<i class="w d" style="left:42.3px;top:474px;width:5.5px"></i>
<i class="p d" style="left:15.1px;top:476px;width:5.8px"></i>
<i class="b" style="left:17.2px;top:478px;width:2.4px"></i>
<i class="l d" style="left:22.7px;top:478px;width:9.3px"></i>
<i class="l d" style="left:32.7px;top:478px;width:8.2px"></i>
<i class="w d" style="left:42.3px;top:478px;width:5.5px"></i>
<i class="w" style="left:15.0px;top:480px;width:1.0px"></i>
<i class="p d" style="left:13.1px;top:482px;width:5.6px"></i>
<i class="b" style="left:15.0px;top:484px;width:2.2px"></i>
<i class="l d" style="left:20.2px;top:484px;width:8.6px"></i>
<i class="l d" style="left:29.1px;top:484px;width:8.6px"></i>
<i class="w" style="left:39.1px;top:484px;width:1.5px"></i>
<i class="o d" style="left:42.5px;top:484px;width:2.6px"></i>
<i class="w" style="left:13.1px;top:486px;width:1.0px"></i>
<i class="w" style="left:10.9px;top:488px;width:1.0px"></i>
<i class="y d" style="left:10.9px;top:490px;width:10.4px"></i>
<i class="l d" style="left:21.7px;top:490px;width:3.3px"></i>
<i class="w d" style="left:25.8px;top:490px;width:4.1px"></i>
<i class="b d" style="left:15.7px;top:492px;width:3.0px"></i>
<i class="l" style="left:19.1px;top:492px;width:2.2px"></i>
<i class="b d" style="left:25.8px;top:492px;width:3.7px"></i>
<i class="y d" style="left:15.0px;top:494px;width:10.0px"></i>
<i class="l d" style="left:25.4px;top:494px;width:4.1px"></i>
<i class="y d" style="left:33.9px;top:494px;width:4.5px"></i>
<i class="b d" style="left:38.8px;top:494px;width:4.8px"></i>
<i class="l d" style="left:44.0px;top:494px;width:8.9px"></i>
<i class="p" style="left:19.1px;top:496px;width:1.9px"></i>
<i class="w d" style="left:21.3px;top:496px;width:8.9px"></i>
<i class="l d" style="left:30.6px;top:496px;width:5.6px"></i>
<i class="g d" style="left:36.9px;top:496px;width:4.5px"></i>
<i class="l" style="left:23.5px;top:498px;width:1.9px"></i>
<i class="w d" style="left:26.5px;top:498px;width:8.2px"></i>
<i class="l d" style="left:35.4px;top:498px;width:5.2px"></i>
<i class="w d" style="left:41.4px;top:498px;width:4.5px"></i>
<i class="l" style="left:23.5px;top:500px;width:1.9px"></i>
<i class="l d" style="left:26.5px;top:500px;width:6.7px"></i>
<i class="w" style="left:33.9px;top:500px;width:1.5px"></i>
<i class="y d" style="left:36.9px;top:500px;width:3.7px"></i>
<i class="o" style="left:41.4px;top:500px;width:1.5px"></i>
<i class="w" style="left:43.6px;top:500px;width:2.2px"></i>
<i class="l d" style="left:46.6px;top:500px;width:8.9px"></i>
<i class="w" style="left:56.2px;top:500px;width:1.5px"></i>
<i class="o d" style="left:59.2px;top:500px;width:4.5px"></i>
<i class="l d" style="left:64.4px;top:500px;width:9.7px"></i>
<i class="l" style="left:23.2px;top:502px;width:2.2px"></i>
<i class="l d" style="left:26.5px;top:502px;width:6.7px"></i>
<i class="w" style="left:33.9px;top:502px;width:1.5px"></i>
<i class="l d" style="left:36.9px;top:502px;width:6.7px"></i>
<i class="p" style="left:23.2px;top:504px;width:1.9px"></i>
<i class="l d" style="left:25.8px;top:504px;width:8.2px"></i>
<i class="p" style="left:25.0px;top:506px;width:1.9px"></i>
<i class="l d" style="left:28.4px;top:506px;width:7.8px"></i>
<i class="o d" style="left:36.9px;top:506px;width:5.9px"></i>
<i class="l d" style="left:29.1px;top:508px;width:3.0px"></i>
<i class="y d" style="left:33.9px;top:508px;width:9.7px"></i>
<i class="o d" style="left:44.4px;top:508px;width:11.2px"></i>
<i class="l d" style="left:29.1px;top:510px;width:3.0px"></i>
<i class="y d" style="left:33.9px;top:510px;width:15.6px"></i>
<i class="o d" style="left:50.3px;top:510px;width:9.7px"></i>
<i class="l d" style="left:29.1px;top:512px;width:3.0px"></i>
<i class="l d" style="left:33.9px;top:512px;width:8.9px"></i>
<i class="w" style="left:43.6px;top:512px;width:1.5px"></i>
<i class="b d" style="left:45.8px;top:512px;width:4.5px"></i>
<i class="p d" style="left:25.0px;top:514px;width:5.6px"></i>
<i class="l d" style="left:29.1px;top:516px;width:3.0px"></i>
<i class="y d" style="left:33.9px;top:516px;width:8.9px"></i>
<i class="w d" style="left:42.9px;top:516px;width:5.9px"></i>
<i class="l d" style="left:49.2px;top:516px;width:6.7px"></i>
<i class="o d" style="left:56.6px;top:516px;width:4.1px"></i>
<i class="l d" style="left:29.1px;top:518px;width:3.0px"></i>
<i class="y d" style="left:33.9px;top:518px;width:15.6px"></i>
<i class="o d" style="left:50.3px;top:518px;width:10.4px"></i>
<i class="w" style="left:25.0px;top:520px;width:1.0px"></i>
<i class="w" style="left:23.2px;top:522px;width:1.0px"></i>
<i class="p d" style="left:19.1px;top:524px;width:5.6px"></i>
<i class="l d" style="left:23.2px;top:526px;width:3.3px"></i>
<i class="y d" style="left:27.6px;top:526px;width:8.9px"></i>
<i class="o d" style="left:37.7px;top:526px;width:4.5px"></i>
<i class="o d" style="left:42.9px;top:526px;width:3.0px"></i>
<i class="o d" style="left:46.6px;top:526px;width:5.9px"></i>
<i class="w" style="left:53.3px;top:526px;width:2.2px"></i>
<i class="p d" style="left:23.5px;top:528px;width:5.2px"></i>
<i class="w" style="left:19.1px;top:530px;width:1.0px"></i>
<i class="w" style="left:15.0px;top:532px;width:1.9px"></i>
<i class="w" style="left:10.9px;top:534px;width:1.0px"></i>
<i class="y d" style="left:10.9px;top:536px;width:18.6px"></i>
<i class="l d" style="left:29.9px;top:536px;width:4.1px"></i>
<i class="w d" style="left:34.7px;top:536px;width:4.5px"></i>
</div>
<div id="shadow"></div>
</div>
<div id="panel">
<div class="t tab on" id="tb0" style="right:1283.5px;transform:scaleX(0.8971);transform-origin:right center;">PROBLEMS</div>
<div style="position:absolute;left:0;top:46.1px;width:64px;height:1.7px;background:#5e5e5e"></div>
<div class="badge" style="left:75.8px;top:14.1px;width:34.1px;height:24.9px;line-height:26.7px;font-size:16.5px">81</div>
<div class="t tab" id="tb1" style="left:139.9px;transform:scaleX(0.8971);transform-origin:left center;">OUTPUT</div>
<div class="t tab" id="tb2" style="left:232px;transform:scaleX(0.8951);transform-origin:left center;">DEBUG CONSOLE</div>
<div class="t tab" id="tb3" style="left:390.8px;transform:scaleX(0.9109);transform-origin:left center;">TERMINAL</div>
<div style="position:absolute;left:837.7px;top:9.1px;width:348.6px;height:35.7px;background:#3c3c3c"></div>
<div class="t " id="flt" style="left:845.9px;top:18.5px;font-size:19.5px;color:#9a9a9a;transform:scaleX(0.9140);transform-origin:left center;">Filter. Eg: text, **/*.ts, !**/node_modu...</div>
<svg style="position:absolute;left:1150px;top:12px;width:32px;height:32px" viewBox="0 0 32 32"><path d="M12.94 7.86 L13.07 4.52 L17.53 4.52 L17.66 7.86 L19.03 8.42 L21.49 6.16 L24.64 9.31 L22.38 11.77 L22.94 13.14 L26.28 13.27 L26.28 17.73 L22.94 17.86 L22.38 19.23 L24.64 21.69 L21.49 24.84 L19.03 22.58 L17.66 23.14 L17.53 26.48 L13.07 26.48 L12.94 23.14 L11.57 22.58 L9.11 24.84 L5.96 21.69 L8.22 19.23 L7.66 17.86 L4.32 17.73 L4.32 13.27 L7.66 13.14 L8.22 11.77 L5.96 9.31 L9.11 6.16 L11.57 8.42Z" fill="#a0a0a0" stroke="#a0a0a0" stroke-width="0.6" stroke-linejoin="round"/><circle cx="15.30" cy="15.50" r="3.3" fill="#3c3c3c"/><circle cx="21.40" cy="21.20" r="6.7" fill="#a0a0a0" stroke="#3c3c3c" stroke-width="1.4"/><rect x="17.20" y="20.40" width="8.4" height="1.6" fill="#3c3c3c"/></svg>
<svg style="position:absolute;left:1210px;top:13px;width:26px;height:26px" viewBox="0 0 26 26"><rect x="9.10" y="3.00" width="13.90" height="1.90" fill="#c8c8c8"/><rect x="20.80" y="3.00" width="2.20" height="14.00" fill="#c8c8c8"/><rect x="6.00" y="6.20" width="14.30" height="1.90" fill="#c8c8c8"/><rect x="17.90" y="6.20" width="2.40" height="13.90" fill="#c8c8c8"/><rect x="2.90" y="9.30" width="14.10" height="13.90" fill="#c8c8c8"/><rect x="6.20" y="12.75" width="6.70" height="7.15" fill="#1a1a1a"/><rect x="6.90" y="14.90" width="5.30" height="2.20" fill="#75beff"/></svg>
<svg style="position:absolute;left:1256px;top:16px;width:28px;height:22px" viewBox="0 0 28 22"><path d="M4.40 15.80 L14.15 6.30 L23.90 15.80" fill="none" stroke="#c8c8c8" stroke-width="2.3" stroke-linejoin="miter"/></svg>
<div style="position:absolute;left:1307.3px;top:18px;width:21.5px;height:17.9px;box-sizing:border-box;border:1.7px solid #c8c8c8;border-right-width:8.2px"></div>
<div class="row" style="top:51.5px">
<svg style="position:absolute;left:-12px;top:0;width:30px;height:33px" viewBox="-12 0 30 33"><path d="M-9.20 8.40 L-4.90 8.40 L0.40 17.59 L5.70 8.40 L10.00 8.40 L0.40 25.00Z" fill="#8dc149"/><path d="M-3.90 8.40 L-2.10 8.40 L0.40 12.73 L2.90 8.40 L4.70 8.40 L0.40 15.85Z" fill="#8dc149"/></svg>
<div class="t r" id="f0" style="left:16.4px;transform:scaleX(0.9710);transform-origin:left center;">dep.vue</div>
<div class="t r dim" id="f1" style="left:93.2px;font-size:17.55px;top:10.3px;transform:scaleX(0.9847);transform-origin:left center;">src\views\system</div>
<div class="badge" style="left:238px;top:4.6px;width:35px;height:24.7px;line-height:26.3px;font-size:16.5px">39</div>
</div>
<div class="row" style="top:84.5px">
<svg class="ei" viewBox="0 0 18 18"><circle cx="9" cy="9" r="7.85" fill="#f48771"/><path d="M5.4 5.4 L12.6 12.6 M12.6 5.4 L5.4 12.6" stroke="#1e1e1e" stroke-width="2.2" fill="none"/></svg>
<div class="t r dim" id="c0" style="left:58.5px;transform:scaleX(0.9158);transform-origin:left center;">[css]</div>
<div class="t r" id="m0" style="left:102.8px;transform:scaleX(0.9847);transform-origin:left center;">} expected</div>
<div class="t r dim" id="p0" style="left:199.70000000000002px;transform:scaleX(0.9607);transform-origin:left center;">(165, 5)</div>
</div>
<div class="row" style="top:117.5px">
<svg class="ei" viewBox="0 0 18 18"><circle cx="9" cy="9" r="7.85" fill="#f48771"/><path d="M5.4 5.4 L12.6 12.6 M12.6 5.4 L5.4 12.6" stroke="#1e1e1e" stroke-width="2.2" fill="none"/></svg>
<div class="t r dim" id="c1" style="left:58.5px;transform:scaleX(0.9158);transform-origin:left center;">[css]</div>
<div class="t r" id="m1" style="left:102.8px;transform:scaleX(1.0008);transform-origin:left center;">at-rule or selector expected</div>
<div class="t r dim" id="p1" style="left:347.0px;transform:scaleX(0.9546);transform-origin:left center;">(167, 5)</div>
</div>
<div class="row sel" style="top:150.5px">
<svg class="ei" viewBox="0 0 18 18"><circle cx="9" cy="9" r="8.3" fill="#f48771" stroke="#1e1e1e" stroke-width="1.1"/><path d="M5.4 5.4 L12.6 12.6 M12.6 5.4 L5.4 12.6" stroke="#1e1e1e" stroke-width="2.2" fill="none"/></svg>
<div class="t r dim" id="c2" style="left:58.5px;transform:scaleX(0.9158);transform-origin:left center;">[css]</div>
<div class="t r" id="m2" style="left:102.8px;transform:scaleX(0.9847);transform-origin:left center;">} expected</div>
<div class="t r dim" id="p2" style="left:199.70000000000002px;transform:scaleX(0.9607);transform-origin:left center;">(174, 9)</div>
</div>
<div class="row" style="top:183.5px">
<svg class="ei" viewBox="0 0 18 18"><circle cx="9" cy="9" r="7.85" fill="#f48771"/><path d="M5.4 5.4 L12.6 12.6 M12.6 5.4 L5.4 12.6" stroke="#1e1e1e" stroke-width="2.2" fill="none"/></svg>
<div class="t r dim" id="c3" style="left:58.5px;transform:scaleX(0.9158);transform-origin:left center;">[css]</div>
<div class="t r" id="m3" style="left:102.8px;transform:scaleX(0.9847);transform-origin:left center;">{ expected</div>
<div class="t r dim" id="p3" style="left:199.70000000000002px;transform:scaleX(0.9534);transform-origin:left center;">(176, 24)</div>
</div>
<div class="row" style="top:216.5px">
<svg class="ei" viewBox="0 0 18 18"><circle cx="9" cy="9" r="7.85" fill="#f48771"/><path d="M5.4 5.4 L12.6 12.6 M12.6 5.4 L5.4 12.6" stroke="#1e1e1e" stroke-width="2.2" fill="none"/></svg>
<div class="t r dim" id="c4" style="left:58.5px;transform:scaleX(0.9158);transform-origin:left center;">[css]</div>
<div class="t r" id="m4" style="left:102.8px;transform:scaleX(1.0008);transform-origin:left center;">at-rule or selector expected</div>
<div class="t r dim" id="p4" style="left:347.0px;transform:scaleX(0.9546);transform-origin:left center;">(177, 9)</div>
</div>
<div class="row" style="top:249.5px">
<svg class="ei" viewBox="0 0 18 18"><circle cx="9" cy="9" r="7.85" fill="#f48771"/><path d="M5.4 5.4 L12.6 12.6 M12.6 5.4 L5.4 12.6" stroke="#1e1e1e" stroke-width="2.2" fill="none"/></svg>
<div class="t r dim" id="c5" style="left:58.5px;transform:scaleX(0.9158);transform-origin:left center;">[css]</div>
<div class="t r" id="m5" style="left:102.8px;transform:scaleX(0.9847);transform-origin:left center;">} expected</div>
<div class="t r dim" id="p5" style="left:199.70000000000002px;transform:scaleX(0.9534);transform-origin:left center;">(188, 13)</div>
</div>
<div class="row" style="top:282.5px">
<svg class="ei" viewBox="0 0 18 18"><circle cx="9" cy="9" r="7.85" fill="#f48771"/><path d="M5.4 5.4 L12.6 12.6 M12.6 5.4 L5.4 12.6" stroke="#1e1e1e" stroke-width="2.2" fill="none"/></svg>
<div class="t r dim" id="c6" style="left:58.5px;transform:scaleX(0.9158);transform-origin:left center;">[css]</div>
<div class="t r" id="m6" style="left:102.8px;transform:scaleX(1.0008);transform-origin:left center;">at-rule or selector expected</div>
<div class="t r dim" id="p6" style="left:347.0px;transform:scaleX(0.9584);transform-origin:left center;">(190, 13)</div>
</div>
<div class="row" style="top:315.5px">
<svg class="ei" viewBox="0 0 18 18"><circle cx="9" cy="9" r="7.85" fill="#f48771"/><path d="M5.4 5.4 L12.6 12.6 M12.6 5.4 L5.4 12.6" stroke="#1e1e1e" stroke-width="2.2" fill="none"/></svg>
<div class="t r dim" id="c7" style="left:58.5px;transform:scaleX(0.9158);transform-origin:left center;">[css]</div>
<div class="t r" id="m7" style="left:102.8px;transform:scaleX(0.9500);transform-origin:left center;">property value expected</div>
<div class="t r dim" id="p7" style="left:320.4px;transform:scaleX(0.9000);transform-origin:left center;">(196, 27)</div>
</div>
</div>
<div id="pborder"></div>
<div id="status"></div>
</body>
</html>
